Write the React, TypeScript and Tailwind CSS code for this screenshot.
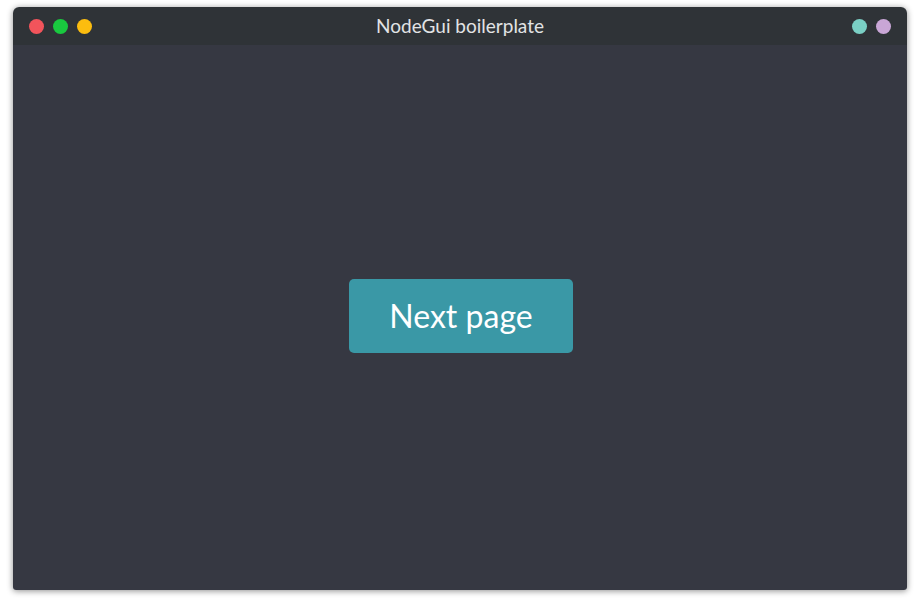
const Dot = ({ color }: { color: string }) => (
  <span className={`block w-[15px] h-[15px] rounded-full ${color}`} />
);

export default function App() {
  return (
    <div className="w-[920px] h-[603px] bg-white pt-[7px] pl-[13px] font-['Lato',sans-serif]">
      <div className="w-[894px] h-[583px] flex flex-col rounded-t-[6px] rounded-b-[3px] overflow-hidden shadow-[0_1px_6px_rgba(0,0,0,0.45)]">
        <div className="h-[38px] bg-[#2f3337] flex items-center justify-between px-[16px] relative">
          <div className="flex gap-[9px]">
            <Dot color="bg-[#f2545b]" />
            <Dot color="bg-[#19c93f]" />
            <Dot color="bg-[#fcbd0f]" />
          </div>
          <div className="absolute inset-0 flex items-center justify-center text-[19px] text-[#e2e3e5]">
            NodeGui boilerplate
          </div>
          <div className="flex gap-[9px]">
            <Dot color="bg-[#7acfc4]" />
            <Dot color="bg-[#c9a6d6]" />
          </div>
        </div>
        <div className="flex-1 bg-[#363842] flex items-center justify-center">
          <button className="w-[224px] h-[74px] mb-[3px] ml-[2px] rounded-[5px] bg-[#3a98a6] text-white text-[32px]">
            Next page
          </button>
        </div>
      </div>
    </div>
  );
}
